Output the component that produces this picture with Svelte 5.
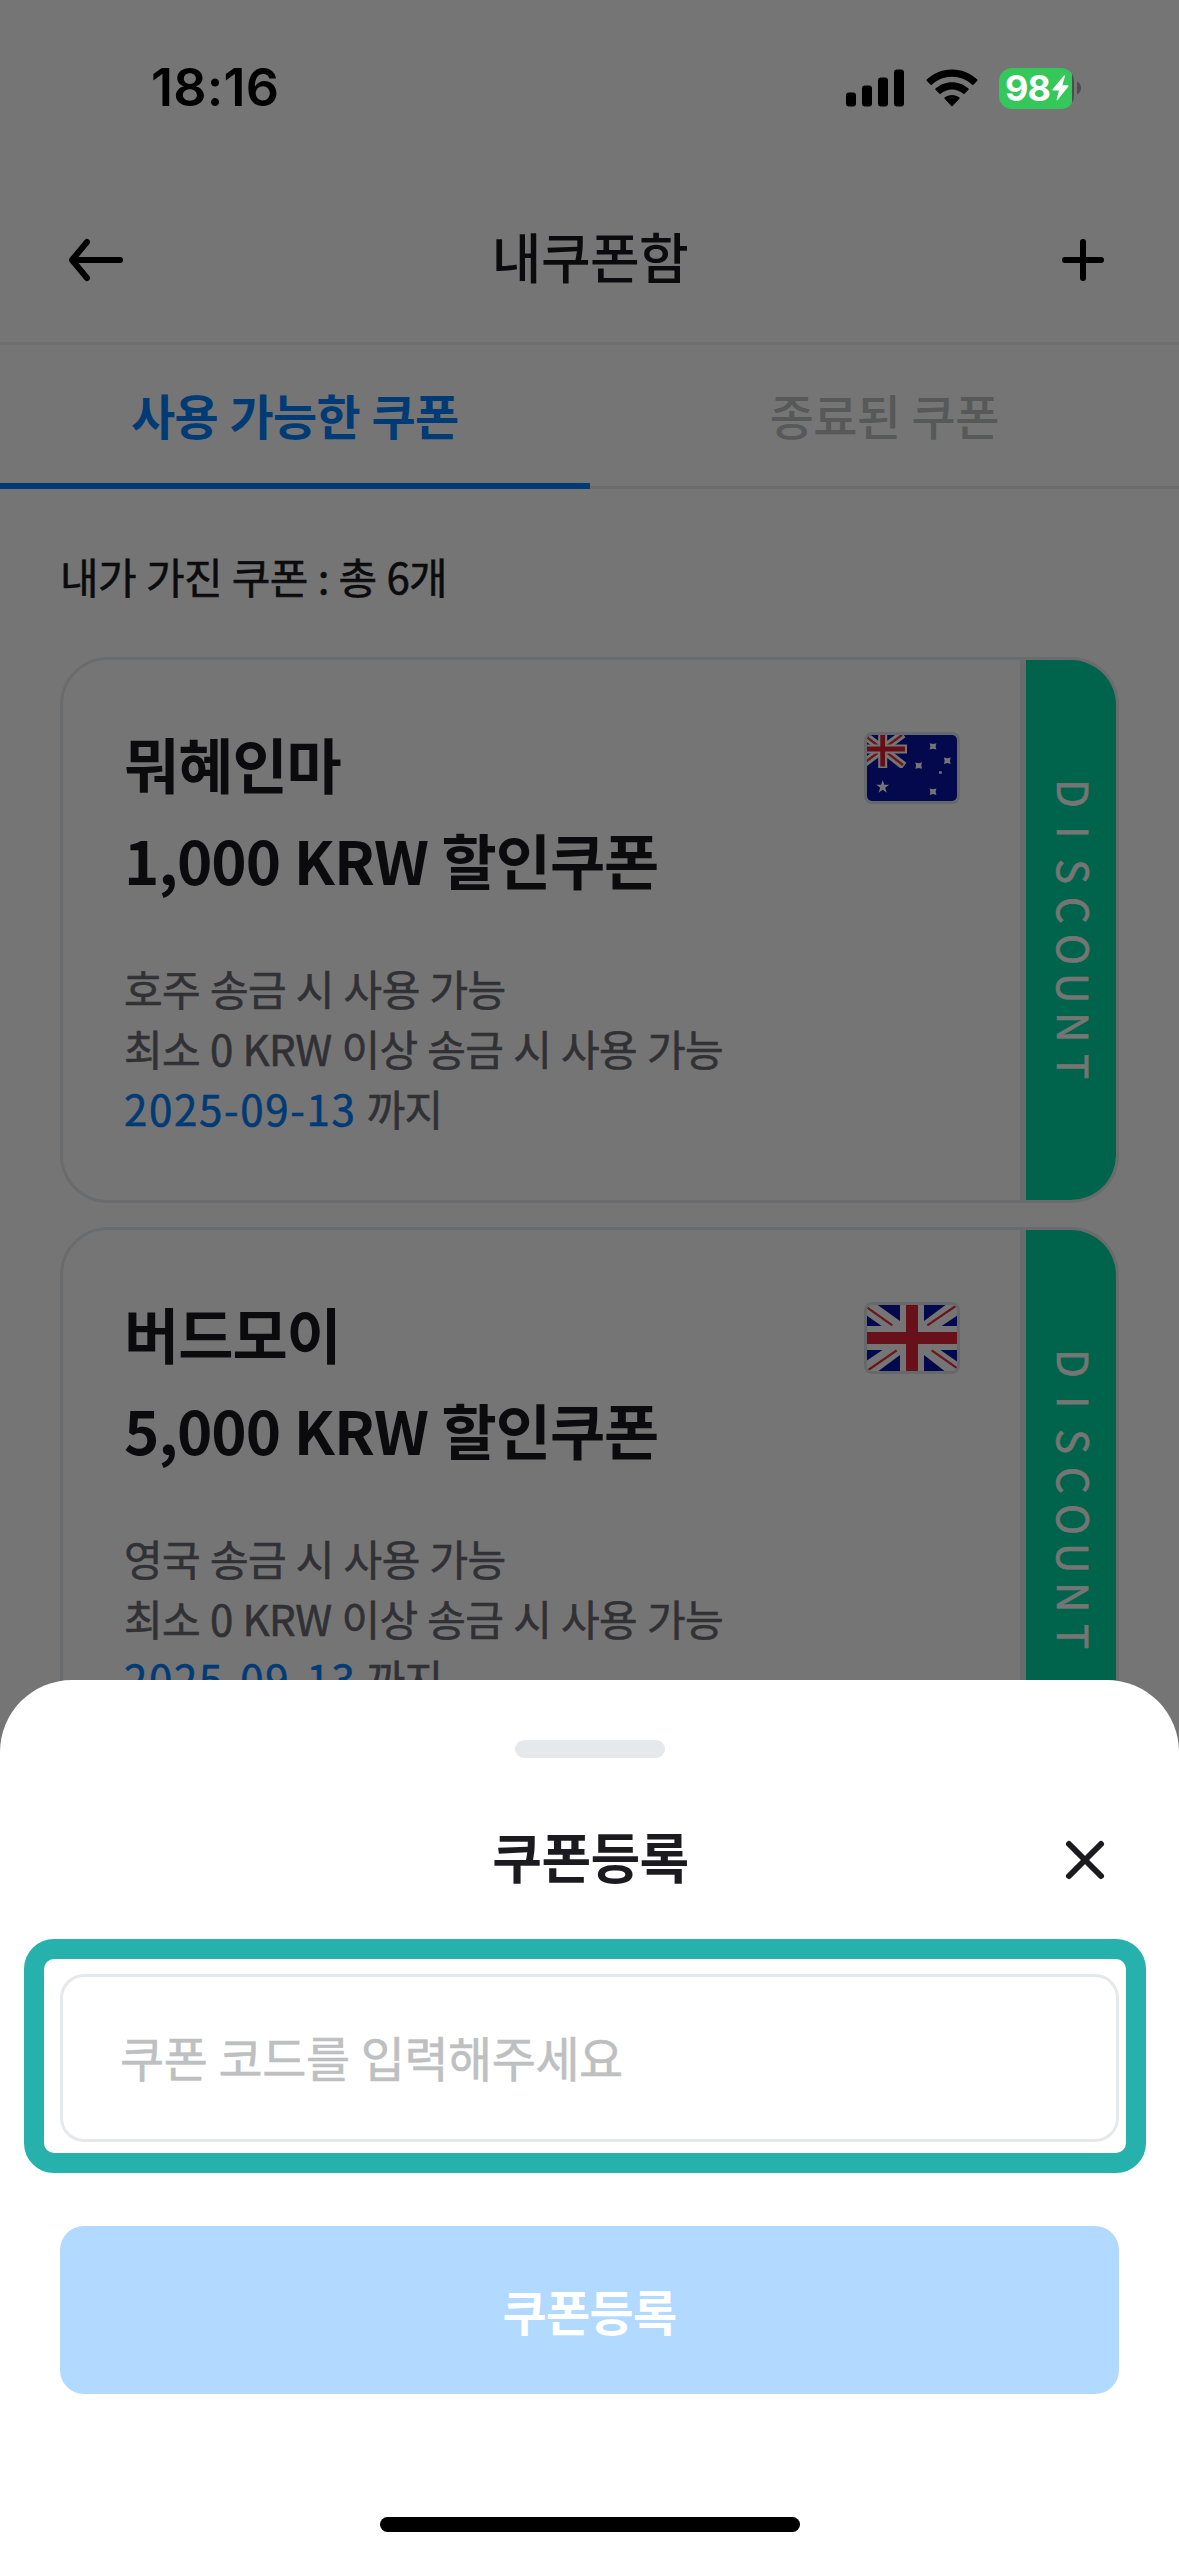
<script>
	let code = '';

	const tabs = ['사용 가능한 쿠폰', '종료된 쿠폰'];
	let activeTab = tabs[0];

	const coupons = [
		{
			name: '뭐혜인마',
			amount: '1,000 KRW 할인쿠폰',
			country: '호주',
			flag: 'au',
			until: '2025-09-13'
		},
		{
			name: '버드모이',
			amount: '5,000 KRW 할인쿠폰',
			country: '영국',
			flag: 'uk',
			until: '2025-09-13'
		}
	];
</script>

<div class="screen">
	<div class="statusbar">
		<span class="time">18:16</span>
		<div class="indicators">
			<svg class="signal" width="58" height="38" viewBox="0 0 58 38">
				<rect x="0" y="23.5" width="10" height="14" rx="3" />
				<rect x="16" y="16.5" width="10" height="21" rx="3" />
				<rect x="32" y="8.5" width="10" height="29" rx="3" />
				<rect x="48" y="0.5" width="10" height="37" rx="3" />
			</svg>
			<svg class="wifi" width="52" height="38" viewBox="0 0 52 38">
				<path d="M26 0.5C36 0.5 45 4.4 51.3 10.6C51.7 11 51.7 11.4 51.3 11.8L47.4 15.7C47 16.1 46.6 16.1 46.2 15.7C40.8 10.6 33.7 7.7 26 7.7S11.2 10.6 5.8 15.7C5.4 16.1 5 16.1 4.6 15.7L0.7 11.8C0.3 11.4 0.3 11 0.7 10.6C7 4.4 16 0.5 26 0.5Z" />
				<path d="M26 13.2C32.3 13.2 38.1 15.6 42.5 19.5C42.9 19.9 42.9 20.4 42.5 20.8L38.5 24.8C38.1 25.2 37.7 25.2 37.3 24.8C34.2 22.2 30.3 20.6 26 20.6S17.8 22.2 14.7 24.8C14.3 25.2 13.9 25.2 13.5 24.8L9.5 20.8C9.1 20.4 9.1 19.9 9.5 19.5C13.9 15.6 19.7 13.2 26 13.2Z" />
				<path d="M26 26C28.8 26 31.4 27 33.4 28.6C33.8 29 33.8 29.4 33.4 29.8L26.6 37C26.2 37.4 25.8 37.4 25.4 37L18.6 29.8C18.2 29.4 18.2 29 18.6 28.6C20.6 27 23.2 26 26 26Z" />
			</svg>
			<div class="battery">
				<span class="level">98</span>
				<svg width="17" height="26" viewBox="0 0 17 26">
					<path d="M12 0.5L0.6 14.2C0.2 14.8 0.5 15.4 1.2 15.4H7L4.6 24.4C4.4 25.4 5 25.6 5.6 25L16.4 11.4C16.8 10.8 16.5 10.2 15.8 10.2H10.4L12.9 1.4C13.1 0.3 12.6 -0.1 12 0.5Z" fill="#fff" />
				</svg>
			</div>
			<svg class="nub" width="4" height="14" viewBox="0 0 4 14">
				<path d="M0 0.5C2.4 1.4 4 4 4 7S2.4 12.6 0 13.5Z" fill="#4d4d4d" />
			</svg>
		</div>
	</div>

	<header class="header">
		<button class="icon-button" aria-label="back">
			<svg width="60" height="60" viewBox="0 0 60 60">
				<path d="M24 12L9 30L24 48M10 30H57" />
			</svg>
		</button>
		<h1>내쿠폰함</h1>
		<button class="icon-button" aria-label="add">
			<svg width="60" height="60" viewBox="0 0 60 60">
				<path d="M30 12V48M12 30H48" />
			</svg>
		</button>
	</header>

	<nav class="tabs">
		{#each tabs as tab}
			<button class="tab" class:active={tab === activeTab} on:click={() => (activeTab = tab)}
				>{tab}</button
			>
		{/each}
	</nav>

	<main class="content">
		<p class="summary">내가 가진 쿠폰 : 총 6개</p>
		{#each coupons as coupon}
			<article class="coupon">
				<div class="coupon-body">
					<div class="coupon-text">
						<h2>{coupon.name}<br />{coupon.amount}</h2>
						<p>
							{coupon.country} 송금 시 사용 가능<br />
							최소 0 KRW 이상 송금 시 사용 가능<br />
							<span class="date">{coupon.until}</span> 까지
						</p>
					</div>
					{#if coupon.flag === 'au'}
						<svg class="flag" width="90" height="66" viewBox="0 0 90 66">
							<rect width="90" height="66" fill="#0a14a8" />
							<svg width="40" height="33" viewBox="0 0 40 33">
								<path d="M-4 -1L37 31M-4 29L36 -1" stroke="#fff" stroke-width="8" />
								<path d="M-3 0L36 30M-3 28L35 0" stroke="#e8303c" stroke-width="2.4" />
								<path d="M15.7 0V33M0 14H40" stroke="#fff" stroke-width="9" />
								<path d="M15.7 0V31.5M0 14H38" stroke="#e01f2d" stroke-width="4.8" />
							</svg>
							<g fill="#fff">
								<path d="M15.7 45L17.3 49.8H22.2L18.2 52.7L19.8 57.8L15.7 54.7L11.6 57.8L13.2 52.7L9.2 49.8H14.1Z" />
								{#each [[66, 11.4], [51.7, 30.6], [80.3, 25.7], [66, 56.7]] as [x, y]}
									<path
										transform="translate({x} {y})"
										d="M-3.4 -3.2L0 -2.4L3.4 -3.2L2.6 0L3.4 3.2L0 2.4L-3.4 3.2L-2.6 0Z"
									/>
								{/each}
								<rect x="72" y="36.3" width="2.8" height="2.4" />
							</g>
						</svg>
					{:else}
						<svg class="flag" width="90" height="66" viewBox="0 0 90 66">
							<rect width="90" height="66" fill="#fff" />
							<path
								d="M10.7 0H33V16ZM0 10.7V21H14.7ZM57 0H78.5L57 16ZM90 10.7V21H74.5ZM0 45H15.5L0 55.5ZM33 50V66H11.5ZM57 50V66H77.5ZM73.5 45H90V56.5Z"
								fill="#0a14a8"
							/>
							<path
								d="M0 2.3L25.3 20.3M88.7 1L60.3 20.3M1.3 65L29.7 45.3M64.7 45.3L90 63"
								stroke="#e8303c"
								stroke-width="2.2"
							/>
							<path d="M45 0V66M0 33H90" stroke="#e22539" stroke-width="12" />
						</svg>
					{/if}
				</div>
				<div class="coupon-side">
					{#each 'DISCOUNT' as letter}<span>{letter}</span>{/each}
				</div>
			</article>
		{/each}
	</main>

	<div class="dim"></div>

	<section class="sheet">
		<div class="handle"></div>
		<div class="sheet-header">
			<h3>쿠폰등록</h3>
			<button class="icon-button" aria-label="close">
				<svg width="60" height="60" viewBox="0 0 60 60">
					<path d="M14 14L46 46M46 14L14 46" />
				</svg>
			</button>
		</div>
		<div class="highlight">
			<input type="text" bind:value={code} placeholder="쿠폰 코드를 입력해주세요" />
		</div>
		<button class="submit">쿠폰등록</button>
		<div class="home-indicator"></div>
	</section>
</div>

<style>
	:global(body) {
		margin: 0;
	}
	.screen {
		position: relative;
		width: 1179px;
		height: 2556px;
		overflow: hidden;
		background-color: #fff;
		color: #1a1a1f;
		font-family: 'Noto Sans CJK KR', sans-serif;
		letter-spacing: -0.6px;
		word-spacing: 1px;
	}
	h1,
	h2,
	h3,
	p {
		margin: 0;
	}
	button,
	input {
		box-sizing: border-box;
		padding: 0;
		border: none;
		background: none;
		font-family: inherit;
		letter-spacing: inherit;
		word-spacing: inherit;
		color: inherit;
	}
	svg {
		display: block;
	}

	/* status bar stays above the dimmed page */
	.statusbar {
		position: relative;
		z-index: 2;
		box-sizing: border-box;
		height: 177px;
		padding: 58px 98px 0 151px;
		display: flex;
		justify-content: space-between;
		align-items: flex-start;
		color: #000;
	}
	.time {
		font-family: Inter, sans-serif;
		font-weight: 600;
		font-size: 52px;
		line-height: 60px;
		letter-spacing: 0.2px;
	}
	.indicators {
		height: 60px;
		display: flex;
		align-items: center;
	}
	.wifi {
		margin-left: 22px;
	}
	.battery {
		box-sizing: border-box;
		width: 75px;
		height: 41px;
		margin-left: 21px;
		padding-left: 6px;
		display: flex;
		align-items: center;
		gap: 2px;
		border-radius: 13px;
		background: linear-gradient(90deg, #34c759 73.5px, #4d4d4d 73.5px);
		color: #fff;
	}
	.level {
		width: 45px;
		font-family: Inter, sans-serif;
		font-weight: 700;
		font-size: 36px;
		line-height: 41px;
		letter-spacing: -0.8px;
	}
	.nub {
		margin-left: 3px;
	}

	.header {
		box-sizing: border-box;
		height: 168px;
		padding: 0 66px 0 63px;
		display: flex;
		justify-content: space-between;
		align-items: center;
		border-bottom: 3px solid #f0f0f0;
	}
	h1 {
		padding: 0 0 8px 4px;
		font-weight: 500;
		font-size: 54px;
		line-height: 78px;
	}
	.icon-button svg {
		fill: none;
		stroke: currentColor;
		stroke-width: 6;
		stroke-linecap: round;
		stroke-linejoin: round;
	}
	.header .icon-button {
		color: #000;
	}

	.tabs {
		height: 144px;
		display: flex;
	}
	.tab {
		flex: 1;
		padding-bottom: 3px;
		border-bottom: 3px solid #e5e9ec;
		font-weight: 500;
		font-size: 48px;
		color: #bdbfc1;
	}
	.tab.active {
		padding-bottom: 0;
		border-bottom: 6px solid #0080ff;
		font-weight: 700;
		color: #0080ff;
	}

	.content {
		padding: 57px 60px 0;
		display: flex;
		flex-direction: column;
		gap: 24px;
	}
	.summary {
		margin-bottom: 27px;
		font-size: 42px;
		line-height: 60px;
	}
	.summary,
	.coupon-text p,
	.coupon-side,
	input::placeholder {
		-webkit-text-stroke: 0.6px currentColor;
	}
	.coupon {
		box-sizing: border-box;
		height: 546px;
		display: flex;
		border: 3px solid #e5e9ec;
		border-radius: 48px;
		overflow: hidden;
	}
	.coupon-body {
		flex: 1;
		padding: 55px 60px 0 61px;
		display: flex;
		justify-content: space-between;
		align-items: flex-start;
		border-right: 6px solid #e5e9ec;
	}
	h2 {
		font-weight: 700;
		font-size: 60px;
		line-height: 96px;
		letter-spacing: -1px;
	}
	.coupon-text {
		white-space: nowrap;
	}
	.coupon-text p {
		margin-top: 51px;
		font-size: 42px;
		line-height: 60px;
		color: #6b6b73;
	}
	.coupon-text .date {
		letter-spacing: 1.7px;
		color: #0080ff;
	}
	.flag {
		margin-top: 17px;
		border: 3px solid #dde4e7;
		border-radius: 8px;
	}
	.coupon-side {
		box-sizing: border-box;
		width: 90px;
		padding-left: 8px;
		display: flex;
		flex-direction: column;
		justify-content: center;
		align-items: center;
		background-color: #00d7a3;
		color: #fff;
	}
	.coupon-side span {
		height: 39px;
		writing-mode: vertical-rl;
		text-align: center;
		font-size: 42px;
		line-height: 60px;
		letter-spacing: 0;
	}

	.dim {
		position: absolute;
		inset: 0;
		background-color: rgba(0, 0, 0, 0.54);
	}

	.sheet {
		position: absolute;
		left: 0;
		right: 0;
		bottom: 0;
		box-sizing: border-box;
		height: 876px;
		padding-top: 60px;
		display: flex;
		flex-direction: column;
		align-items: center;
		border-radius: 72px 72px 0 0;
		background-color: #fff;
	}
	.handle {
		width: 150px;
		height: 18px;
		border-radius: 9px;
		background-color: #e5e9ec;
	}
	.sheet-header {
		box-sizing: border-box;
		width: 100%;
		height: 78px;
		margin-top: 63px;
		padding: 0 64px 0 66px;
		display: grid;
		grid-template-columns: 60px 1fr 60px;
		align-items: center;
	}
	h3 {
		grid-column: 2;
		padding-bottom: 8px;
		text-align: center;
		font-weight: 700;
		font-size: 54px;
		line-height: 70px;
	}
	.highlight {
		box-sizing: border-box;
		width: 1122px;
		height: 234px;
		margin: 40px 9px 0 0;
		padding: 15px 7px 0 16px;
		border: 20px solid #27b1ad;
		border-radius: 30px;
	}
	input {
		display: block;
		width: 1059px;
		height: 168px;
		padding: 0 57px 5px;
		border: 3px solid #e5e9ec;
		border-radius: 24px;
		font-size: 48px;
		letter-spacing: -0.5px;
	}
	input::placeholder {
		color: #bdbfc1;
		opacity: 1;
	}
	.submit {
		width: 1059px;
		height: 168px;
		margin-top: 53px;
		border-radius: 24px;
		background-color: #b2d9ff;
		font-weight: 700;
		font-size: 48px;
		color: #fff;
	}
	.home-indicator {
		width: 420px;
		height: 15px;
		margin-top: 123px;
		border-radius: 8px;
		background-color: #000;
	}
</style>
